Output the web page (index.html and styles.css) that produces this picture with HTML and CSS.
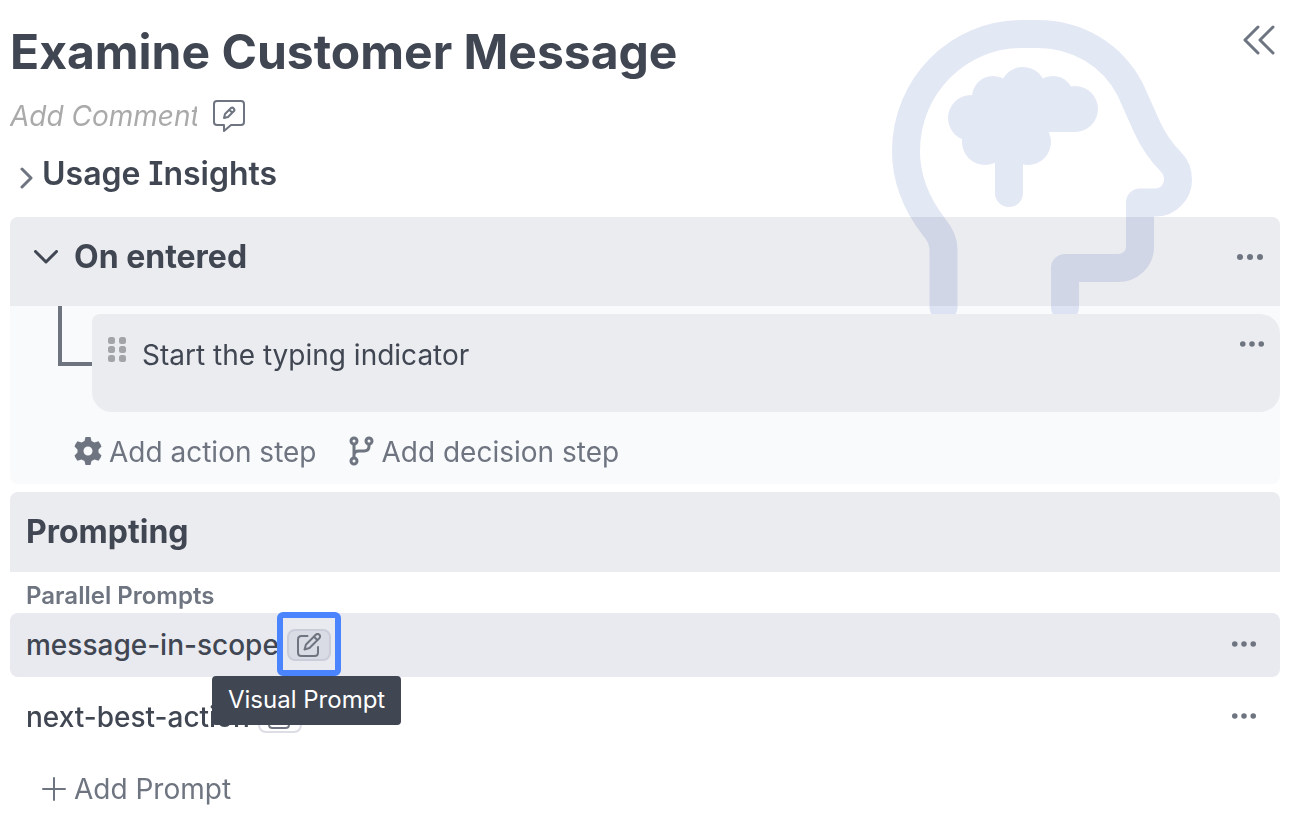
FILE: index.html
```html
<!DOCTYPE html>
<html lang="en">
<head>
<meta charset="utf-8">
<title>Examine Customer Message</title>
<link rel="stylesheet" href="styles.css">
</head>
<body>
<svg class="symbols" aria-hidden="true">
  <symbol id="dots" viewBox="0 0 26 6"><circle cx="3" cy="3" r="3"/><circle cx="13" cy="3" r="3"/><circle cx="23" cy="3" r="3"/></symbol>
  <symbol id="edit" viewBox="0 0 24 24"><path d="M10.500 3H4.500Q1 3 1 6.500V19.500Q1 23 4.500 23H17.500Q21 23 21 19.500V14"/><path d="M7.500 16.500L9 11.500L18.800 1.700Q20.500 .2 22.300 1.700Q23.900 3.500 22.300 5.200L12.500 15Z"/><path d="M17 3.800L20.300 7"/></symbol>
</svg>
<main class="page">
  <svg class="head" viewBox="0 0 302 298" aria-hidden="true">
    <g transform="translate(-891 -19)">
      <path class="head-line" d="M943.500 307V250C943.500 241 940 234 934 227C917 205 906 181 906 151C906 86 958 34 1022 34H1037C1078 34 1112 55 1130 89L1147 127C1153 140 1161 152 1171 162C1176 167 1178 173 1178 180C1178 192 1168 202.500 1156 202.500H1140V247C1140 259 1130 268 1118 268H1065V307"/>
      <g class="head-brain"><circle cx="971" cy="118" r="23"/><circle cx="993" cy="97" r="21"/><circle cx="1023" cy="90" r="23"/><circle cx="1053" cy="97" r="21"/><circle cx="1075" cy="109" r="23"/><circle cx="985" cy="142" r="23"/><circle cx="1028" cy="142" r="23"/><path d="M971 97H1075V132H1049V142L1028 150H985L962 141Z"/><path d="M995 140H1023V193A14 14 0 0 1 995 193Z"/></g>
    </g>
  </svg>
  <header class="top">
    <h1>Examine Customer Message</h1>
    <button class="icon-button" type="button" aria-label="Collapse panel">
      <svg class="icon-collapse" viewBox="0 0 34 30"><path d="M16 2L3 15L16 28M31 2L18 15L31 28"/></svg>
    </button>
  </header>
  <div class="comment">
    <input class="comment-input" type="text" placeholder="Add Comment" aria-label="Comment">
    <button class="icon-button" type="button" aria-label="Edit comment">
      <svg class="icon-comment" viewBox="0 0 34 34"><path d="M5 2H29Q32 2 32 5V23Q32 26 29 26H19L12 32V26H5Q2 26 2 23V5Q2 2 5 2Z"/><path class="thin" d="M12 19L13 15L19 9Q21 8 22 10Q23 11 22 12L16 18ZM17.500 11L20 13.500"/></svg>
    </button>
  </div>
  <button class="insights" type="button" aria-expanded="false">
    <svg class="icon-right" viewBox="0 0 14 22"><path d="M2 2L11 11L2 20"/></svg>
    <span>Usage Insights</span>
  </button>

  <section class="entered">
    <div class="entered-head">
      <button class="toggle" type="button" aria-expanded="true">
        <svg class="icon-down" viewBox="0 0 24 14"><path d="M1.500 1.500L12 12L22.500 1.500"/></svg>
        <span>On entered</span>
      </button>
      <button class="icon-button" type="button" aria-label="On entered options"><svg class="dots dots-large"><use href="#dots"/></svg></button>
    </div>
    <div class="steps">
      <div class="branch"></div>
      <article class="step">
        <svg class="icon-grip" viewBox="0 0 18 26"><rect width="7" height="7" rx="2.500"/><rect x="11" width="7" height="7" rx="2.500"/><rect y="9" width="7" height="7" rx="2.500"/><rect x="11" y="9" width="7" height="7" rx="2.500"/><rect y="18" width="7" height="7" rx="2.500"/><rect x="11" y="18" width="7" height="7" rx="2.500"/></svg>
        <span class="step-name">Start the typing indicator</span>
        <button class="icon-button" type="button" aria-label="Step options"><svg class="dots"><use href="#dots"/></svg></button>
      </article>
    </div>
    <div class="actions">
      <button class="add" type="button">
        <svg class="icon-gear" viewBox="0 0 28 28"><path fill-rule="evenodd" d="M11.500 0H16.500L17.500 4L20.500 5.500L24.500 4.200Q27 7.500 27.500 9.500L24.500 12.500V15.500L27.500 18.500Q26.500 21.500 24.500 23.800L20.500 22.500L17.500 24L16.500 28H11.500L10.500 24L7.500 22.500L3.500 23.800Q1 20.500 .5 18.500L3.500 15.500V12.500L.5 9.500Q1.500 6.500 3.500 4.200L7.500 5.500L10.500 4ZM14 9.500A4.500 4.500 0 1 0 14 18.500A4.500 4.500 0 1 0 14 9.500Z"/></svg>
        <span>Add action step</span>
      </button>
      <button class="add" type="button">
        <svg class="icon-branch" viewBox="0 0 26 30"><circle cx="6" cy="5" r="3"/><circle cx="21" cy="5" r="3"/><circle cx="6" cy="25" r="3"/><path d="M6 8.500V21.500M21 8.500V10Q21 15 16 15H11Q6 15 6 19"/></svg>
        <span>Add decision step</span>
      </button>
    </div>
  </section>

  <section class="prompting">
    <h2>Prompting</h2>
    <h3>Parallel Prompts</h3>
    <ul class="prompts">
      <li class="prompt prompt-active">
        <span>message-in-scope</span>
        <button class="edit edit-focus" type="button" aria-label="Visual Prompt" aria-describedby="tip"><svg class="icon-edit"><use href="#edit"/></svg></button>
        <span class="tooltip" id="tip" role="tooltip">Visual Prompt</span>
        <button class="icon-button more" type="button" aria-label="message-in-scope options"><svg class="dots"><use href="#dots"/></svg></button>
      </li>
      <li class="prompt">
        <span>next-best-action</span>
        <button class="edit" type="button" aria-label="Edit next-best-action"><svg class="icon-edit"><use href="#edit"/></svg></button>
        <button class="icon-button more" type="button" aria-label="next-best-action options"><svg class="dots"><use href="#dots"/></svg></button>
      </li>
    </ul>
    <button class="add add-prompt" type="button">
      <svg class="icon-plus" viewBox="0 0 24 24"><path d="M12 1V23M1 12H23"/></svg>
      <span>Add Prompt</span>
    </button>
  </section>
</main>
</body>
</html>
```
FILE: styles.css
```css
* { box-sizing: border-box; }

body {
  margin: 0;
  background: #fff;
  color: #404652;
  font-family: Inter, "Liberation Sans", sans-serif;
  font-size: 28px;
  line-height: 36px;
}

button {
  display: flex;
  align-items: center;
  border: 0;
  padding: 0;
  background: none;
  color: inherit;
  font: inherit;
  cursor: pointer;
}

svg {
  display: block;
  flex: none;
  fill: none;
  stroke: #6e7480;
  stroke-width: 3;
  stroke-linecap: round;
  stroke-linejoin: round;
}

h1, h2, h3, ul { margin: 0; padding: 0; }

.symbols { position: absolute; width: 0; height: 0; }

.page {
  position: relative;
  padding: 22px 32px 16px 10px;
}

.head {
  position: absolute;
  top: 19px;
  right: 119px;
  width: 302px;
  height: 298px;
  z-index: 1;
  mix-blend-mode: multiply;
  pointer-events: none;
}
.head-line { stroke: #e3e8f5; stroke-width: 28; }
.head-brain { fill: #e3e8f5; stroke: none; }

.top {
  display: flex;
  justify-content: space-between;
  align-items: flex-start;
  padding-right: 4px;
}
h1 { font-size: 48px; line-height: 60px; font-weight: 700; }
.icon-collapse { width: 34px; height: 30px; margin-top: 3px; }

.comment {
  display: flex;
  align-items: center;
  gap: 15px;
  height: 36px;
  margin-top: 16px;
}
.comment-input {
  width: 187px;
  height: 36px;
  border: 0;
  padding: 0;
  background: none;
  color: #404652;
  font: inherit;
  font-style: italic;
}
.comment-input::placeholder { color: #aaa; opacity: 1; }
.icon-comment { width: 34px; height: 34px; stroke-width: 2; }
.thin { stroke-width: 2; }

.insights {
  gap: 8px;
  margin-top: 20px;
  padding-left: 10px;
  font-size: 32px;
  line-height: 40px;
  font-weight: 600;
  font-feature-settings: "cv08";
}
.icon-right { width: 14px; height: 22px; margin-top: 8px; }

.entered {
  margin-top: 23px;
  border-radius: 8px;
  background: #f9fafc;
}
.entered-head {
  display: flex;
  align-items: flex-start;
  justify-content: space-between;
  padding: 20px 16px 29px 24px;
  border-radius: 8px 8px 0 0;
  background: #ebecf0;
}
.toggle {
  gap: 16px;
  font-size: 32px;
  line-height: 40px;
  font-weight: 700;
}
.icon-down { width: 24px; height: 14px; stroke: #404652; }

.dots { width: 24px; height: 6px; fill: #6e7480; stroke: none; }
.dots-large { width: 28px; height: 6px; }
.entered-head .icon-button { height: 40px; }

.steps { display: flex; padding-left: 48px; }
.branch {
  width: 34px;
  height: 60px;
  border: solid #6e7480;
  border-width: 0 0 4px 4px;
}
.step {
  position: relative;
  z-index: 2;
  display: flex;
  flex: 1;
  align-items: flex-start;
  min-height: 98px;
  margin-top: 8px;
  padding: 23px 16px;
  border-radius: 8px 20px 20px 20px;
  background: #ebecf0;
}
.icon-grip { width: 18px; height: 26px; fill: #a3a4a8; stroke: none; }
.step-name { flex: 1; margin-left: 16px; }
.step .icon-button { height: 14px; }

.actions {
  display: flex;
  gap: 32px;
  padding: 22px 64px 14px;
}
.add { gap: 8px; color: #6e7480; }
.icon-gear { width: 28px; height: 28px; fill: #6e7480; stroke: none; }
.icon-branch { width: 26px; height: 30px; }
.actions .add { gap: 7px; }
.actions svg { margin-bottom: 2px; }

.prompting { margin-top: 8px; }
h2 {
  padding: 20px 16px;
  border-radius: 8px 8px 0 0;
  background: #ebecf0;
  font-size: 32px;
  line-height: 40px;
  font-weight: 700;
}
h3 {
  padding: 8px 16px 1px;
  color: #6e7480;
  font-size: 24px;
  line-height: 32px;
  font-weight: 600;
}
.prompts {
  display: grid;
  gap: 8px;
  list-style: none;
}
.prompt {
  position: relative;
  display: flex;
  align-items: center;
  gap: 8px;
  height: 64px;
  padding: 0 24px 0 16px;
  border-radius: 8px;
  font-weight: 500;
}
.prompt-active { z-index: 1; background: #e9eaf0; }
.more { margin-left: auto; padding-bottom: 2px; }
.edit {
  position: relative;
  justify-content: center;
  width: 44px;
  height: 32px;
  border: 2px solid #dcdde5;
  border-radius: 8px;
}
.icon-edit { width: 24px; height: 24px; stroke-width: 2; }
.edit-focus { border-color: #cbcdd9; background: #d9dbe5; }
.edit-focus::after {
  content: "";
  position: absolute;
  inset: -19px -12px -17px;
  border: 6px solid #4a85ff;
  border-radius: 6px;
}
.tooltip {
  position: absolute;
  top: 63px;
  left: 202px;
  padding: 8px 16px 9px;
  border-radius: 4px;
  background: #404652;
  color: #fff;
  font-size: 24px;
  line-height: 32px;
  font-weight: 400;
}
.add-prompt { margin: 22px 0 0 32px; }
.icon-plus { width: 24px; height: 24px; stroke-width: 2; }
```
